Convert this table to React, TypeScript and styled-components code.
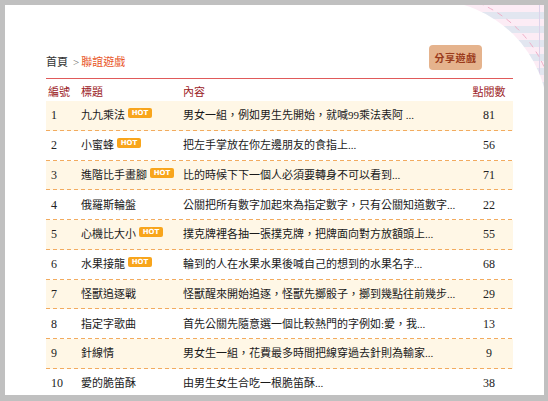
import React from "react";
import styled, { createGlobalStyle } from "styled-components";

const GlobalStyle = createGlobalStyle`
  html, body { margin: 0; padding: 0; background: #c0c0c0; }
  body { font-family: "Liberation Serif", "Noto Sans CJK TC", serif; color: #222; }
`;

const Frame = styled.div`
  box-sizing: border-box;
  height: 401px;
  padding: 5px 4px 6px 5px;
`;

const Panel = styled.div`
  position: relative;
  box-sizing: border-box;
  height: 390px;
  overflow: hidden;
  background: #fff;
  padding: 40px 0 0 41px;
`;

const Decoration = styled.svg`
  position: absolute;
  top: 0;
  right: 0;
`;

const Content = styled.div`
  position: relative;
  width: 467px;
`;

const Bar = styled.div`
  display: flex;
  justify-content: space-between;
  align-items: flex-start;
  height: 33px;
  border-bottom: 1px solid #e05a5a;
`;

const Crumbs = styled.div`
  margin-top: 10px;
  font-size: 11px;
  line-height: 14px;
  color: #333;
  white-space: nowrap;
`;

const Sep = styled.span`
  color: #666;
  margin: 0 2px 0 5px;
`;

const Current = styled.span`
  color: #e8541e;
`;

const ShareButton = styled.button`
  width: 53px;
  height: 25px;
  margin-right: 31px;
  padding: 0;
  border: none;
  border-radius: 4px;
  background: #e5b38d;
  color: #9b3b1b;
  font-family: "Noto Sans CJK TC", sans-serif;
  font-size: 10px;
  font-weight: 700;
  letter-spacing: 0.5px;
`;

const cols = "35px 102px 282px 48px";

const HeaderRow = styled.div`
  display: grid;
  grid-template-columns: ${cols};
  height: 22px;
  box-sizing: border-box;
  padding-top: 4px;
  line-height: 19px;
  font-size: 11px;
  color: #9b2226;
`;

const HeadCell = styled.div<{ $center?: boolean; $pad?: number }>`
  padding-left: ${(p) => p.$pad ?? 0}px;
  text-align: ${(p) => (p.$center ? "center" : "left")};
  white-space: nowrap;
`;

const Row = styled.div<{ $shaded: boolean }>`
  display: grid;
  grid-template-columns: ${cols};
  align-items: center;
  height: 29.75px;
  box-sizing: border-box;
  padding-bottom: 1px;
  font-size: 11px;
  line-height: 14px;
  color: #1a1a1a;
  background:
    repeating-linear-gradient(to right, #f2ab5f 0 4px, transparent 4px 7px) left bottom / 100% 1px no-repeat,
    ${(p) => (p.$shaded ? "#fff7e6" : "#fff")};
`;

const NumCell = styled.div`
  padding-left: 5px;
  font-size: 12px;
  color: #222;
`;

const TitleCell = styled.div`
  display: flex;
  align-items: center;
  white-space: nowrap;
`;

const Hot = styled.span`
  display: inline-flex;
  align-items: center;
  justify-content: center;
  height: 10px;
  width: 24px;
  margin-left: 3px;
  margin-bottom: 4px;
  border-radius: 2px;
  background: #f8a51c;
  color: #fff;
  font-family: "DejaVu Sans", sans-serif;
  font-size: 7px;
  font-weight: 700;
  line-height: 10px;
`;

const TextCell = styled.div`
  white-space: nowrap;
`;

const CountCell = styled.div`
  text-align: center;
  font-size: 12px;
  color: #222;
`;

type Game = { id: number; title: string; hot: boolean; desc: string; views: number };

const games: Game[] = [
  { id: 1, title: "九九乘法", hot: true, desc: "男女一組，例如男生先開始，就喊99乘法表阿 ...", views: 81 },
  { id: 2, title: "小蜜蜂", hot: true, desc: "把左手掌放在你左邊朋友的食指上...", views: 56 },
  { id: 3, title: "進階比手畫腳", hot: true, desc: "比的時候下下一個人必須要轉身不可以看到...", views: 71 },
  { id: 4, title: "俄羅斯輪盤", hot: false, desc: "公關把所有數字加起來為指定數字，只有公關知道數字...", views: 22 },
  { id: 5, title: "心機比大小", hot: true, desc: "撲克牌裡各抽一張撲克牌，把牌面向對方放額頭上...", views: 55 },
  { id: 6, title: "水果接龍", hot: true, desc: "輪到的人在水果水果後喊自己的想到的水果名字...", views: 68 },
  { id: 7, title: "怪獸追逐戰", hot: false, desc: "怪獸醒來開始追逐，怪獸先擲骰子，擲到幾點往前幾步...", views: 29 },
  { id: 8, title: "指定字歌曲", hot: false, desc: "首先公關先隨意選一個比較熱門的字例如:愛，我...", views: 13 },
  { id: 9, title: "針線情", hot: false, desc: "男女生一組，花費最多時間把線穿過去針則為輸家...", views: 9 },
  { id: 10, title: "愛的脆笛酥", hot: false, desc: "由男生女生合吃一根脆笛酥...", views: 38 },
];

export default function App() {
  return (
    <>
      <GlobalStyle />
      <Frame>
        <Panel>
          <Decoration width="114" height="120" viewBox="0 0 114 120">
            <defs>
              <pattern id="stripes" width="14" height="14" patternUnits="userSpaceOnUse">
                <rect width="14" height="7" fill="#fcecf5" />
                <rect y="7" width="14" height="7" fill="#e2e6f0" />
              </pattern>
            </defs>
            <rect width="114" height="120" fill="url(#stripes)" />
            <rect x="109" width="1" height="120" fill="#dcd3ea" />
            <circle cx="0" cy="113" r="125" fill="none" stroke="#efb0c8" strokeWidth="1" strokeDasharray="6 5" />
            <circle cx="0" cy="113" r="118" fill="#fff" />
          </Decoration>
          <Content>
            <Bar>
              <Crumbs>
                首頁<Sep>&gt;</Sep>
                <Current>聯誼遊戲</Current>
              </Crumbs>
              <ShareButton>分享遊戲</ShareButton>
            </Bar>
            <HeaderRow>
              <HeadCell $pad={2}>編號</HeadCell>
              <HeadCell>標題</HeadCell>
              <HeadCell>內容</HeadCell>
              <HeadCell $center>點閱數</HeadCell>
            </HeaderRow>
            {games.map((g) => (
              <Row key={g.id} $shaded={g.id % 2 === 1}>
                <NumCell>{g.id}</NumCell>
                <TitleCell>
                  {g.title}
                  {g.hot && <Hot>HOT</Hot>}
                </TitleCell>
                <TextCell>{g.desc}</TextCell>
                <CountCell>{g.views}</CountCell>
              </Row>
            ))}
          </Content>
        </Panel>
      </Frame>
    </>
  );
}
